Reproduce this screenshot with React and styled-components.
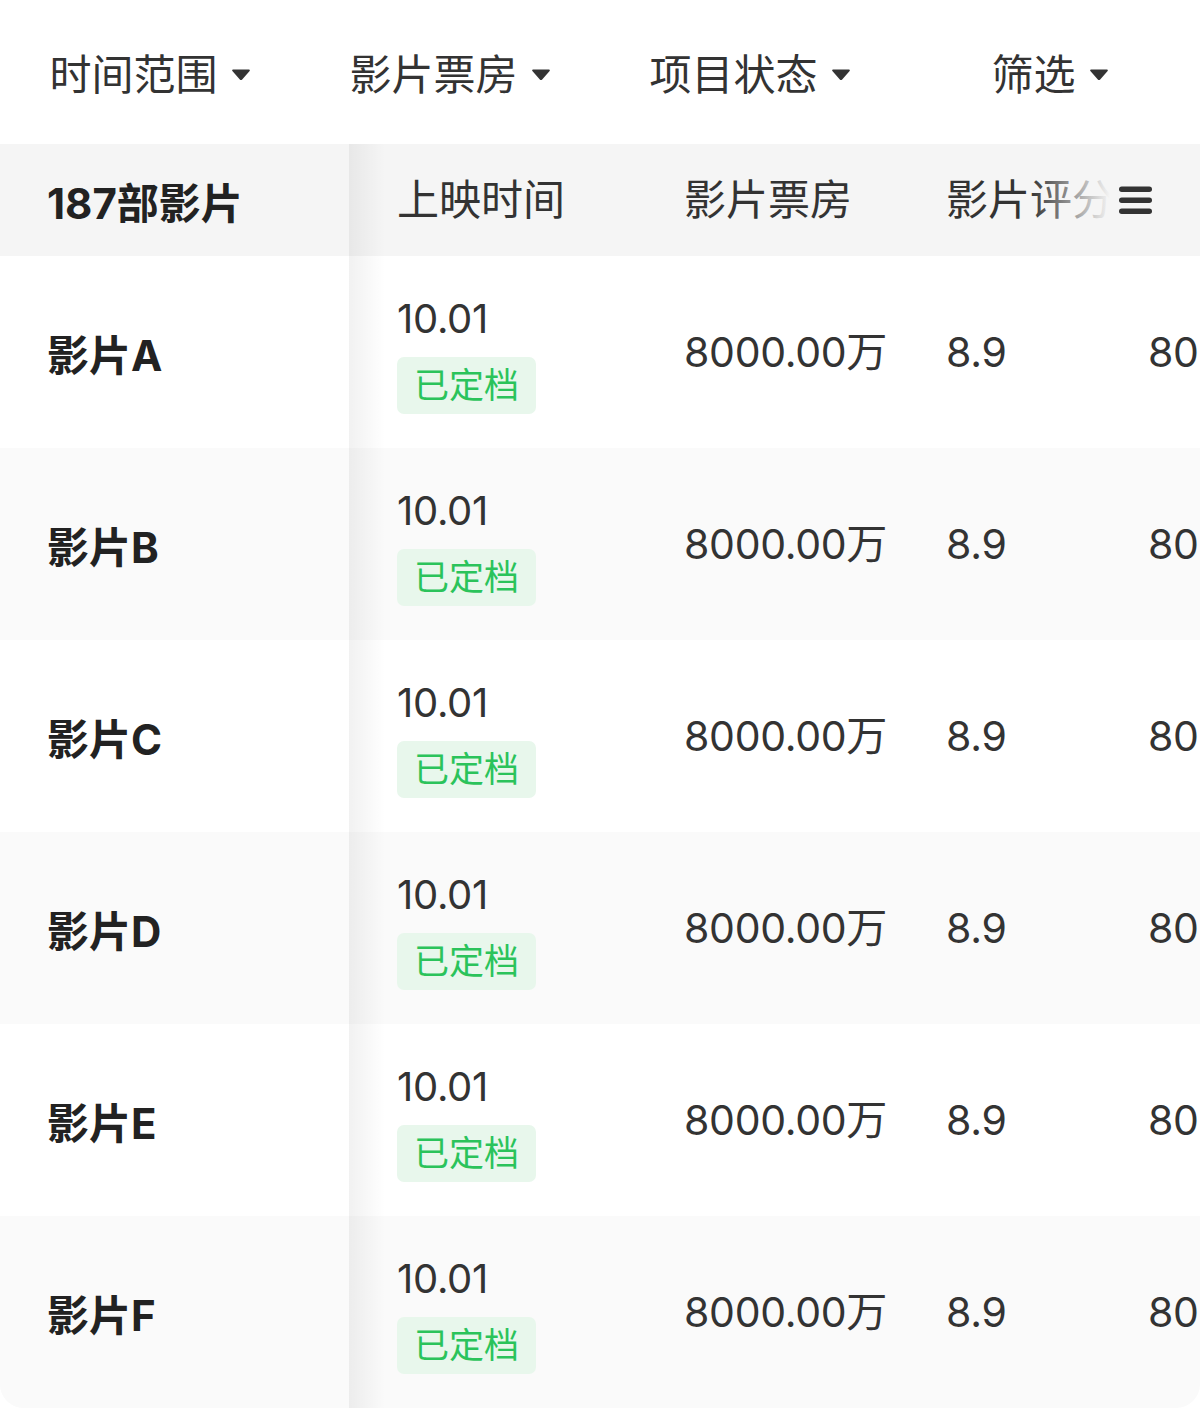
import styled, { createGlobalStyle } from "styled-components"

const GlobalStyle = createGlobalStyle`
    body {
        margin: 0;
        background: #ffffff;
        font-family: Inter, "Noto Sans CJK SC", sans-serif;
        color: #333333;
    }
`

const Page = styled.div`
    width: 1200px;
    height: 1408px;
    overflow: hidden;
    background: #ffffff;
`

const FilterBar = styled.div`
    display: grid;
    grid-template-columns: repeat(4, 300px);
    height: 144px;
    align-items: center;
`

const FilterItem = styled.div`
    display: flex;
    align-items: center;
    justify-content: center;
    gap: 13px;
    font-size: 42px;
    line-height: 1;
    color: #333333;
    padding-top: 5px;
`

const Table = styled.div`
    border-radius: 0 0 24px 24px;
    overflow: hidden;
`

const Row = styled.div`
    display: flex;
    align-items: center;
    height: ${({ $height }) => $height}px;
    background: ${({ $bg }) => $bg};
    position: relative;
    overflow: hidden;
`

const NameCell = styled.div`
    position: relative;
    align-self: stretch;
    display: flex;
    align-items: center;
    flex-shrink: 0;
    width: 302px;
    padding-left: 47px;
    font-size: 42px;
    font-weight: 700;
    color: #222222;
    background: inherit;

    &::after {
        content: "";
        position: absolute;
        top: 0;
        bottom: 0;
        left: 100%;
        width: 36px;
        background: linear-gradient(to right, rgba(0, 0, 0, 0.055), rgba(0, 0, 0, 0));
        pointer-events: none;
    }
`

const Cells = styled.div`
    display: flex;
    align-items: center;
    padding-left: 48px;
    flex-shrink: 0;
`

const Cell = styled.div`
    width: ${({ $w }) => $w}px;
    flex-shrink: 0;
    font-size: ${({ $size }) => $size || 41}px;
    line-height: 1;
    color: #333333;
    white-space: nowrap;
    letter-spacing: ${({ $size }) => ($size ? 0 : -0.3)}px;
`

const DateBlock = styled.div`
    display: flex;
    flex-direction: column;
    align-items: flex-start;
    gap: 17px;
    padding-top: 8px;
`

const DateText = styled.div`
    font-size: 40px;
    line-height: 42px;
    color: #333333;
`

const Tag = styled.div`
    height: 57px;
    padding: 0 17px;
    display: flex;
    align-items: center;
    border-radius: 7px;
    background: #e8f7ec;
    color: #2bc35b;
    font-size: 35px;
    letter-spacing: 0;
`

const HeaderMenu = styled.div`
    position: absolute;
    top: 0;
    right: 0;
    bottom: 0;
    width: 170px;
    display: flex;
    align-items: center;
    justify-content: flex-end;
    padding-right: 48px;
    box-sizing: border-box;
    background: linear-gradient(to right, rgba(245, 245, 245, 0) 0px, #f5f5f5 80px);
`

const Caret = () => (
    <svg width="20" height="13" viewBox="0 0 20 13">
        <path d="M2 1.5 H18 Q19.6 1.5 18.6 3 L11.2 11.4 Q10 12.6 8.8 11.4 L1.4 3 Q0.4 1.5 2 1.5 Z" fill="#333" />
    </svg>
)

const MenuIcon = () => (
    <svg width="33" height="32" viewBox="0 0 33 32">
        <rect x="0" y="2.5" width="33" height="5.5" rx="2.75" fill="#333" />
        <rect x="0" y="13.5" width="33" height="5.5" rx="2.75" fill="#333" />
        <rect x="0" y="24.5" width="33" height="5.5" rx="2.75" fill="#333" />
    </svg>
)

const filters = ["时间范围", "影片票房", "项目状态", "筛选"]
const films = ["A", "B", "C", "D", "E", "F"]
const widths = [287, 262, 202, 262]

export default function App() {
    return (
        <Page>
            <GlobalStyle />
            <FilterBar>
                {filters.map(f => (
                    <FilterItem key={f}>
                        {f}
                        <Caret />
                    </FilterItem>
                ))}
            </FilterBar>
            <Table>
                <Row $height={112} $bg="#f5f5f5">
                    <NameCell>187部影片</NameCell>
                    <Cells>
                        <Cell $w={widths[0]} $size={42}>上映时间</Cell>
                        <Cell $w={widths[1]} $size={42}>影片票房</Cell>
                        <Cell $w={widths[2]} $size={42}>影片评分</Cell>
                        <Cell $w={widths[3]} $size={42}>想看人数</Cell>
                    </Cells>
                    <HeaderMenu>
                        <MenuIcon />
                    </HeaderMenu>
                </Row>
                {films.map((f, i) => (
                    <Row key={f} $height={192} $bg={i % 2 ? "#fafafa" : "#ffffff"}>
                        <NameCell>影片{f}</NameCell>
                        <Cells>
                            <Cell $w={widths[0]}>
                                <DateBlock>
                                    <DateText>10.01</DateText>
                                    <Tag>已定档</Tag>
                                </DateBlock>
                            </Cell>
                            <Cell $w={widths[1]}>8000.00万</Cell>
                            <Cell $w={widths[2]}>8.9</Cell>
                            <Cell $w={widths[3]}>8000.00万</Cell>
                        </Cells>
                    </Row>
                ))}
            </Table>
        </Page>
    )
}
